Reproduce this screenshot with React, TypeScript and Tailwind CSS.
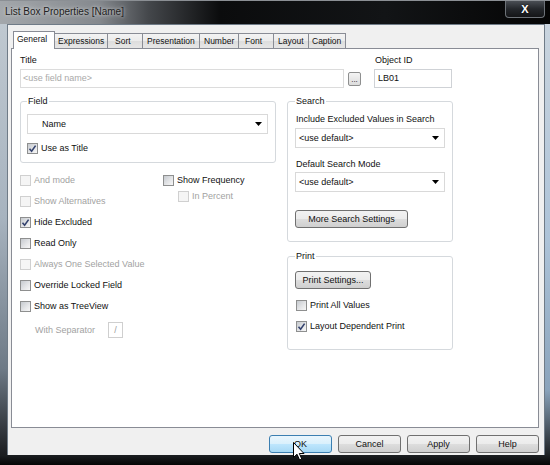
import React from 'react';

type TabDef = { label: string; cls: string; active?: boolean };

const tabs: TabDef[] = [
  { label: 'General', cls: 'w-[42px] pl-[3px]', active: true },
  { label: 'Expressions', cls: 'w-[54px] pl-[3px]' },
  { label: 'Sort', cls: 'w-[36px] pl-[7px]' },
  { label: 'Presentation', cls: 'w-[58px] pl-[4px]' },
  { label: 'Number', cls: 'w-[40px] pl-[4px]' },
  { label: 'Font', cls: 'w-[36px] pl-[6px]' },
  { label: 'Layout', cls: 'w-[36px] pl-[4px]' },
  { label: 'Caption', cls: 'w-[38px] pl-[3px]' },
];

const CheckBox: React.FC<{ label: string; checked?: boolean; disabled?: boolean; className?: string }> = ({
  label,
  checked,
  disabled,
  className = '',
}) => (
  <div className={`flex items-center gap-[3px] ${className}`}>
    <span
      className={`flex h-[11px] w-[11px] shrink-0 items-center justify-center border ${
        disabled
          ? 'border-[#d0d0d0] bg-[#f5f5f5]'
          : 'border-[#8e8f8f] bg-[linear-gradient(135deg,#c6cacf_0%,#e6e7e9_60%,#f7f7f7_100%)]'
      }`}
    >
      {checked && (
        <svg width="9" height="9" viewBox="0 0 9 9">
          <path d="M1.5 4.8 L3.6 7.2 L7.6 1.6" fill="none" stroke="#33426e" strokeWidth="1.6" />
        </svg>
      )}
    </span>
    <span className={disabled ? 'text-[#a2a2a2]' : 'text-[#111]'}>{label}</span>
  </div>
);

const Button: React.FC<{ children: React.ReactNode; className?: string; hot?: boolean }> = ({
  children,
  className = '',
  hot,
}) => (
  <button
    type="button"
    className={`flex h-[18px] items-center justify-center rounded-[3px] border text-[#111] ${
      hot
        ? 'border-[#3c7fb1] bg-[linear-gradient(to_bottom,#eaf6fd_0%,#d9f0fc_50%,#bee6fd_51%,#a7d9f5_100%)]'
        : 'border-[#707070] bg-[linear-gradient(to_bottom,#f2f2f2_0%,#ebebeb_50%,#dddddd_51%,#cfcfcf_100%)]'
    } ${className}`}
  >
    {children}
  </button>
);

const Combo: React.FC<{ value: string; className?: string; textClass?: string }> = ({
  value,
  className = '',
  textClass = '',
}) => (
  <div className={`flex h-[20px] items-center justify-between border border-[#d9d9d9] bg-white pr-[5px] ${className}`}>
    <span className={textClass}>{value}</span>
    <svg width="7" height="4" viewBox="0 0 7 4">
      <polygon points="0,0 7,0 3.5,4" fill="#000" />
    </svg>
  </div>
);

const Cursor = () => (
  <svg className="absolute left-[293px] top-[442px]" width="13" height="20" viewBox="0 0 13 20">
    <path
      d="M0.5 0.5 L0.5 15.5 L4 12.2 L6.6 18 L8.8 17 L6.3 11.5 L11 11.5 Z"
      fill="#fff"
      stroke="#000"
      strokeWidth="1"
      strokeLinejoin="round"
    />
  </svg>
);

export default function App() {
  return (
    <div className="relative flex h-[465px] w-[550px] flex-col overflow-hidden bg-black font-['Liberation_Sans',Arial,sans-serif] text-[9px] leading-[11px] text-[#111]">
      {/* glass caption */}
      <div className="relative flex h-[24px] items-start justify-between border-t border-[#8b8f94] bg-[linear-gradient(90deg,#a3a7ab_0%,#85898e_18%,#44474b_27%,#0b0c0d_40%,#121416_70%,#050505_100%)]">
        <span className="pl-[5px] pt-[5px] text-[10px] leading-[12px] text-[#222] [text-shadow:0_0_6px_rgba(255,255,255,0.6),0_0_3px_rgba(255,255,255,0.5)]">
          List Box Properties [Name]
        </span>
        <div className="mr-[5px] flex h-[17px] w-[40px] items-center justify-center rounded-b-[4px] border border-t-0 border-[#6d7278] bg-[linear-gradient(to_bottom,#4a4e54_0%,#24272b_50%,#141517_100%)]">
          <span className="text-[11px] font-bold leading-[11px] text-white [text-shadow:0_0_2px_#000]">X</span>
        </div>
      </div>

      <div className="flex h-[431px]">
        <div className="w-[7px] bg-[linear-gradient(to_bottom,#bfc8d0_0%,#a7b3bf_45%,#6e7a86_80%,#1b1d20_100%)]" />

        {/* client area */}
        <div className="flex w-[538px] flex-col border-x border-t border-[#6f7b87] bg-[#f0f0f0]">
          <div className="ml-[3px] mt-[6px]">
            {/* tab strip */}
            <div className="flex h-[17px] items-end pl-[2px] text-[8.5px]">
              {tabs.map((t, i) =>
                t.active ? (
                  <div
                    key={t.label}
                    className={`relative z-10 -mb-px flex h-[18px] items-center overflow-hidden whitespace-nowrap border border-b-0 border-[#898c95] bg-white pb-[2px] ${t.cls}`}
                  >
                    {t.label}
                  </div>
                ) : (
                  <div
                    key={t.label}
                    className={`flex h-[15px] items-center overflow-hidden whitespace-nowrap border border-b-0 border-[#898c95] bg-[linear-gradient(to_bottom,#f3f3f3_0%,#ebebeb_50%,#dddddd_51%,#e6e6e6_100%)] ${
                      i > 0 ? '-ml-px' : ''
                    } ${t.cls}`}
                  >
                    {t.label}
                  </div>
                ),
              )}
            </div>

            {/* General page */}
            <div className="h-[380px] w-[528px] border border-[#898c95] bg-white pl-[8px] pt-[6px]">
              <div className="flex">
                <div className="flex flex-col">
                  <span>Title</span>
                  <div className="mt-[3px] flex items-center gap-[4px]">
                    <div className="flex h-[19px] w-[324px] items-center border border-[#dcdcdc] bg-white pl-[2px] text-[#a9a9a9]">
                      &lt;use field name&gt;
                    </div>
                    <div className="flex h-[14px] w-[13px] items-end justify-center rounded-[2px] border border-[#8e8f8f] bg-[linear-gradient(to_bottom,#f4f4f4_0%,#dcdcdc_100%)] pb-[1px] text-[8px] leading-[8px]">
                      ...
                    </div>
                  </div>
                </div>
                <div className="ml-[13px] flex flex-col">
                  <span className="pl-[1px]">Object ID</span>
                  <div className="mt-[3px] flex h-[19px] w-[78px] items-center border border-[#cfd2d6] bg-white pl-[3px]">
                    LB01
                  </div>
                </div>
              </div>

              <div className="mt-[8px] flex gap-[11px]">
                {/* left column */}
                <div className="flex w-[256px] flex-col">
                  <fieldset className="rounded-[3px] border border-[#d5d9dd] pb-[6px] pl-[6px] pr-[7px]">
                    <legend className="px-[1px] leading-[11px]">Field</legend>
                    <Combo value="Name" className="mt-[7px]" textClass="pl-[14px]" />
                    <CheckBox label="Use as Title" checked className="mt-[6px] h-[16px]" />
                  </fieldset>

                  <div className="mt-[7px] flex">
                    <div className="flex w-[143px] flex-col">
                      <CheckBox label="And mode" disabled className="h-[21px]" />
                      <CheckBox label="Show Alternatives" disabled className="h-[21px]" />
                      <CheckBox label="Hide Excluded" checked className="h-[21px]" />
                      <CheckBox label="Read Only" className="h-[21px]" />
                      <CheckBox label="Always One Selected Value" disabled className="h-[21px]" />
                      <CheckBox label="Override Locked Field" className="h-[21px]" />
                      <CheckBox label="Show as TreeView" className="h-[21px]" />
                      <div className="mt-[5px] flex items-center pl-[15px]">
                        <span className="w-[73px] text-[#a2a2a2]">With Separator</span>
                        <div className="flex h-[16px] w-[15px] items-center justify-center border border-[#cfcfcf] text-[#9a9a9a]">
                          /
                        </div>
                      </div>
                    </div>
                    <div className="flex flex-col pt-[2px]">
                      <CheckBox label="Show Frequency" className="h-[16px]" />
                      <CheckBox label="In Percent" disabled className="h-[16px] pl-[15px]" />
                    </div>
                  </div>
                </div>

                {/* right column */}
                <div className="flex w-[166px] flex-col">
                  <fieldset className="flex flex-col rounded-[3px] border border-[#d5d9dd] pb-[13px] pl-[7px] pr-[7px]">
                    <legend className="px-[1px] leading-[11px]">Search</legend>
                    <span className="mt-[7px] pl-[1px]">Include Excluded Values in Search</span>
                    <Combo value="<use default>" className="mt-[3px]" textClass="pl-[3px]" />
                    <span className="mt-[11px] pl-[1px]">Default Search Mode</span>
                    <Combo value="<use default>" className="mt-[2px]" textClass="pl-[3px]" />
                    <Button className="mt-[18px] w-[113px]">More Search Settings</Button>
                  </fieldset>

                  <fieldset className="mt-[9px] flex flex-col rounded-[3px] border border-[#d5d9dd] pb-[15px] pl-[7px] pr-[7px]">
                    <legend className="px-[1px] leading-[11px]">Print</legend>
                    <Button className="mt-[9px] w-[76px]">Print Settings...</Button>
                    <CheckBox label="Print All Values" className="mt-[8px] h-[16px] pl-[1px]" />
                    <CheckBox label="Layout Dependent Print" checked className="mt-[5px] h-[16px] pl-[1px]" />
                  </fieldset>
                </div>
              </div>
            </div>
          </div>

          {/* dialog buttons */}
          <div className="mt-[7px] flex justify-end gap-[6px] pr-[5px]">
            <Button hot className="w-[63px]">OK</Button>
            <Button className="w-[63px]">Cancel</Button>
            <Button className="w-[63px]">Apply</Button>
            <Button className="w-[63px]">Help</Button>
          </div>
        </div>

        <div className="w-[5px] bg-[linear-gradient(to_bottom,#c9d4de_0%,#adc3d8_50%,#8aa3bb_85%,#1e2124_100%)]" />
      </div>

      <div className="h-[10px] bg-[linear-gradient(to_bottom,#1c1f22_0%,#050505_100%)]" />

      <Cursor />
    </div>
  );
}
